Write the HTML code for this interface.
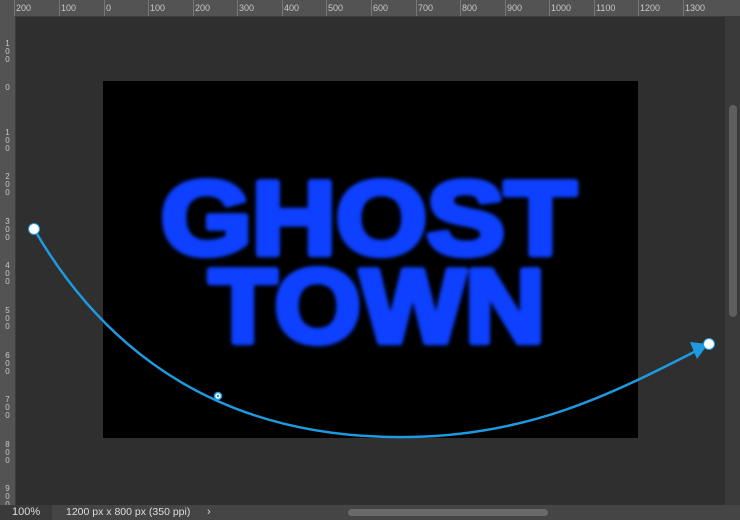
<!DOCTYPE html>
<html><head><style>
html,body{margin:0;padding:0;}
body{width:740px;height:520px;background:#2f2f2f;position:relative;overflow:hidden;font-family:"Liberation Sans",sans-serif;}
.top{position:absolute;left:0;top:0;width:740px;height:16px;background:#535353;border-bottom:1px solid #3d3d3d;}
.left{position:absolute;left:0;top:16px;width:15px;height:490px;background:#535353;border-right:1px solid #3d3d3d;}
.tl{position:absolute;top:3px;font-size:9px;color:#c8c8c8;}
.tk{position:absolute;top:0;width:1px;height:16px;background:#777;}
.ll{position:absolute;left:4px;font-size:8px;line-height:8px;color:#c8c8c8;width:7px;text-align:center;}
.doc{position:absolute;left:103px;top:81px;width:535px;height:357px;background:#000;}
.vs{position:absolute;left:725px;top:16px;width:15px;height:489px;background:#3a3a3a;}
.vt{position:absolute;left:729px;top:105px;width:8px;height:212px;background:#5e5e5e;border-radius:4px;}
.status{position:absolute;left:0;top:505px;width:740px;height:15px;background:#454545;font-size:11px;color:#ddd;}
</style></head><body>
<div class="top">
<span class="tk" style="left:14px"></span><span class="tl" style="left:16px">200</span>
<span class="tk" style="left:59px"></span><span class="tl" style="left:61px">100</span>
<span class="tk" style="left:104px"></span><span class="tl" style="left:106px">0</span>
<span class="tk" style="left:148px"></span><span class="tl" style="left:150px">100</span>
<span class="tk" style="left:193px"></span><span class="tl" style="left:195px">200</span>
<span class="tk" style="left:237px"></span><span class="tl" style="left:239px">300</span>
<span class="tk" style="left:282px"></span><span class="tl" style="left:284px">400</span>
<span class="tk" style="left:326px"></span><span class="tl" style="left:328px">500</span>
<span class="tk" style="left:371px"></span><span class="tl" style="left:373px">600</span>
<span class="tk" style="left:416px"></span><span class="tl" style="left:418px">700</span>
<span class="tk" style="left:460px"></span><span class="tl" style="left:462px">800</span>
<span class="tk" style="left:505px"></span><span class="tl" style="left:507px">900</span>
<span class="tk" style="left:549px"></span><span class="tl" style="left:551px">1000</span>
<span class="tk" style="left:594px"></span><span class="tl" style="left:596px">1100</span>
<span class="tk" style="left:638px"></span><span class="tl" style="left:640px">1200</span>
<span class="tk" style="left:683px"></span><span class="tl" style="left:685px">1300</span>
</div>
<div class="left">
<div class="ll" style="top:24px">1<br>0<br>0</div>
<div class="ll" style="top:68px">0</div>
<div class="ll" style="top:113px">1<br>0<br>0</div>
<div class="ll" style="top:157px">2<br>0<br>0</div>
<div class="ll" style="top:202px">3<br>0<br>0</div>
<div class="ll" style="top:246px">4<br>0<br>0</div>
<div class="ll" style="top:291px">5<br>0<br>0</div>
<div class="ll" style="top:336px">6<br>0<br>0</div>
<div class="ll" style="top:380px">7<br>0<br>0</div>
<div class="ll" style="top:425px">8<br>0<br>0</div>
<div class="ll" style="top:469px">9<br>0<br>0</div>
</div>
<div class="doc"></div>
<div class="vs"></div><div class="vt"></div>
<svg width="740" height="520" style="position:absolute;left:0;top:0">
<defs><filter id="b"><feGaussianBlur stdDeviation="1.8"/></filter></defs>
<g fill="#0a40ff" stroke="#0a40ff" stroke-width="6.5" stroke-linejoin="round" filter="url(#b)" font-family="Liberation Sans" font-weight="bold">
<text x="161" y="254" font-size="104" textLength="415" lengthAdjust="spacingAndGlyphs">GHOST</text>
<text x="209" y="342" font-size="104" textLength="336" lengthAdjust="spacingAndGlyphs">TOWN</text>
</g>
<path d="M34 229 C 110 360, 230 440, 410 437 C 530 435, 610 395, 698 350" fill="none" stroke="#1e9be0" stroke-width="2.5"/>
<polygon points="708,344 690,342 697,359" fill="#1e9be0"/>
<circle cx="34" cy="229" r="5.5" fill="#fff" stroke="#1e9be0" stroke-width="1"/>
<circle cx="709" cy="344" r="5.5" fill="#fff" stroke="#1e9be0" stroke-width="1"/>
<circle cx="218" cy="396" r="3.5" fill="#fff" stroke="#1e9be0" stroke-width="1.5"/>
<circle cx="218" cy="396" r="1.2" fill="#1e9be0"/>
</svg>
<div class="status">
<div style="position:absolute;left:0;top:0;width:52px;height:15px;background:#3a3a3a"></div>
<span style="position:absolute;left:12px;top:1px">100%</span>
<span style="position:absolute;left:66px;top:1px;font-size:10.5px">1200 px x 800 px (350 ppi)</span>
<span style="position:absolute;left:207px;top:1px">›</span>
<div style="position:absolute;left:348px;top:4px;width:200px;height:7px;background:#6a6a6a;border-radius:4px"></div>
</div>
</body></html>
